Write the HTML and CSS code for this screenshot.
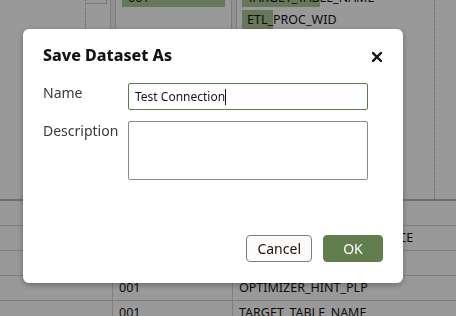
FILE: index.html
```html
<!DOCTYPE html>
<html lang="en">
  <head>
    <meta charset="UTF-8" />
    <meta name="viewport" content="width=device-width, initial-scale=1.0" />
    <title>Save Dataset As</title>
    <link rel="stylesheet" href="styles.css">
  </head>
  <body>
    <div class="app">
      <!-- join diagram behind the dialog -->
      <div class="diagram">
        <div class="lane">
          <div class="stub"></div>
          <div class="splitter"></div>
          <div class="entity entity-key">
            <div class="cell cell-top"><span class="hit">001</span></div>
          </div>
          <div class="splitter"></div>
          <div class="entity">
            <div class="cell cell-top"><span class="hit">TARGET_TAB</span>LE_NAME</div>
            <div class="cell"><span class="hit">ETL_</span>PROC_WID</div>
          </div>
        </div>
      </div>

      <!-- data grid -->
      <div class="grid">
        <div class="row"><div class="c1"></div><div class="c2"></div><div class="c3"></div></div>
        <div class="row"><div class="c1"></div><div class="c2"></div><div class="c3 c3-far">OPTIMIZER_HINT_REFERENCE</div></div>
        <div class="row"><div class="c1"></div><div class="c2"></div><div class="c3"></div></div>
        <div class="row"><div class="c1"></div><div class="c2">001</div><div class="c3">OPTIMIZER_HINT_PLP</div></div>
        <div class="row"><div class="c1"></div><div class="c2">001</div><div class="c3">TARGET_TABLE_NAME</div></div>
      </div>
    </div>

    <div class="overlay">
      <div class="dialog">
        <div class="dialog-head">
          <h1 class="dialog-title">Save Dataset As</h1>
          <button class="close-btn" aria-label="Close">
            <svg width="10" height="10" viewBox="0 0 10 10">
              <path d="M1 1 L9 9 M9 1 L1 9" stroke="#161513" stroke-width="2.4" stroke-linecap="square" fill="none" />
            </svg>
          </button>
        </div>
        <div class="dialog-body">
          <label class="label">Name</label>
          <div class="field field-focus">Test Connection<span class="caret"></span></div>
          <label class="label">Description</label>
          <div class="field field-area"></div>
        </div>
        <div class="dialog-foot">
          <button class="btn btn-cancel">Cancel</button>
          <button class="btn btn-ok">OK</button>
        </div>
      </div>
    </div>
  </body>
</html>
```

FILE: styles.css
```css
body {
  margin: 0;
  font-family: "Noto Sans", "Open Sans", sans-serif;
  color: #161513;
  background-color: #ffffff;
  overflow: hidden;
}

.app {
  width: 456px;
  height: 316px;
}

/* diagram */
.diagram {
  height: 199px;
  border-bottom: 2px solid #b8b8b8;
  padding-left: 85px;
  overflow: hidden;
}
.lane {
  display: flex;
  width: 348px;
  height: 100%;
  border-left: 1px dotted #a9a9a9;
  border-right: 1px dotted #a9a9a9;
}
.stub {
  width: 20px;
  height: 3px;
  border-right: 1px solid #c8c8c8;
  border-bottom: 1px solid #c8c8c8;
  margin-right: 3px;
}
.splitter {
  width: 4px;
  height: 100%;
  background-color: #f2f2f2;
  border-left: 1px solid #cfcfcf;
  border-right: 1px solid #cfcfcf;
}
.entity {
  flex: 1;
  padding: 0 6px 0 5px;
  font-size: 12.5px;
}
.entity-key {
  flex: 0 0 103px;
  padding: 0 6px;
}
.cell {
  height: 19px;
  line-height: 19px;
  white-space: nowrap;
}
.cell-top {
  margin-top: -12px;
  margin-bottom: 3px;
}
.entity-key .hit {
  display: block;
  padding-left: 6px;
}
.hit {
  display: inline-block;
  background-color: #acc795;
  padding-left: 5px;
}

/* grid */
.grid {
  font-size: 12.5px;
}
.row {
  display: flex;
  height: 24px;
  border-bottom: 1px solid #d6d6d6;
}
.row div {
  padding-left: 6px;
  line-height: 24px;
  white-space: nowrap;
}
.c1 {
  width: 106px;
}
.c2 {
  width: 113px;
  border-left: 1px solid #d6d6d6;
}
.c3 {
  flex: 1;
  border-left: 1px solid #d6d6d6;
}

/* dialog */
.overlay {
  position: fixed;
  top: 0;
  left: 0;
  right: 0;
  bottom: 0;
  background-color: rgba(0, 0, 0, 0.4);
}
.dialog {
  position: absolute;
  left: 23px;
  top: 29px;
  width: 380px;
  background-color: #ffffff;
  border-radius: 6px;
  box-shadow: 0 2px 6px rgba(0, 0, 0, 0.3);
}
.dialog-head {
  display: flex;
  justify-content: space-between;
  align-items: center;
  padding: 16px 21px 0 20px;
}
.dialog-title {
  margin: 0;
  font-size: 16px;
  line-height: 20px;
  font-weight: 800;
}
.close-btn {
  border: none;
  background: none;
  padding: 0;
  width: 10px;
  height: 10px;
  margin-top: 3px;
  display: flex;
}

.dialog-body {
  display: grid;
  grid-template-columns: 85px 240px;
  row-gap: 11px;
  padding: 18px 20px 0 20px;
}
.label {
  font-size: 14px;
  line-height: 20px;
  color: #3b3936;
}
.field {
  box-sizing: border-box;
  height: 27px;
  border: 1px solid #8b8985;
  border-radius: 2px;
  padding: 0 6px;
  font-size: 12px;
  display: flex;
  align-items: center;
}
.field-focus {
  border-color: #5b7d47;
}
.field-area {
  height: 59px;
}
.caret {
  display: inline-block;
  width: 1px;
  height: 16px;
  background-color: #161513;
}

.dialog-foot {
  display: flex;
  justify-content: flex-end;
  gap: 11px;
  padding: 55px 20px 21px 0;
}
.btn {
  font-family: "Noto Sans", "Open Sans", sans-serif;
  font-size: 14px;
  height: 27px;
  padding: 0 10px;
  border-radius: 4px;
  cursor: pointer;
}
.btn-cancel {
  background-color: #fcfbfa;
  border: 1px solid #807d79;
  color: #161513;
}
.btn-ok {
  min-width: 60px;
  background-color: #627e4f;
  border: 1px solid #627e4f;
  color: #ffffff;
}
```
